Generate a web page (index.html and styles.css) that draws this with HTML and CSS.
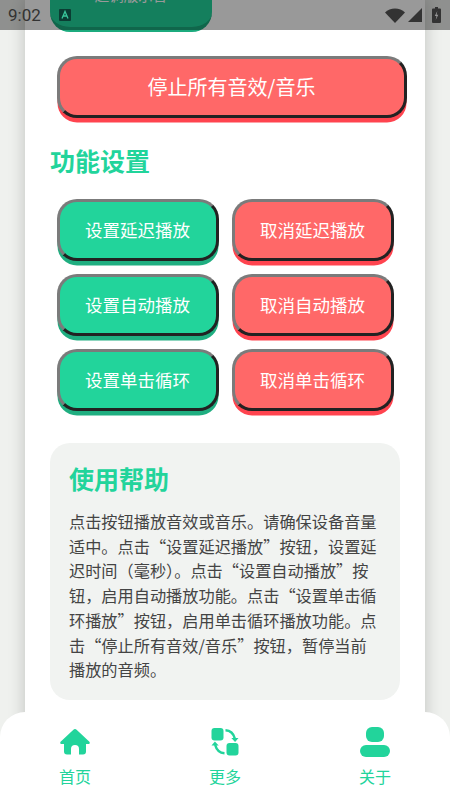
FILE: index.html
```html
<!DOCTYPE html>
<html lang="zh">
<head>
<meta charset="utf-8">
<title>功能设置</title>
<link rel="stylesheet" href="styles.css">
</head>
<body>
<div class="screen">
  <main class="card">
    <div class="peek"><span class="peek-text">起调版示音</span></div>
    <button class="btn red wide">停止所有音效/音乐</button>
    <h2 class="section-title">功能设置</h2>
    <div class="grid">
      <button class="btn green">设置延迟播放</button>
      <button class="btn red">取消延迟播放</button>
      <button class="btn green">设置自动播放</button>
      <button class="btn red">取消自动播放</button>
      <button class="btn green">设置单击循环</button>
      <button class="btn red">取消单击循环</button>
    </div>
    <section class="help">
      <h2 class="help-title">使用帮助</h2>
      <p class="help-text">点击按钮播放音效或音乐。请确保设备音量适中。点击“设置延迟播放”按钮，设置延迟时间（毫秒）。点击“设置自动播放”按钮，启用自动播放功能。点击“设置单击循环播放”按钮，启用单击循环播放功能。点击“停止所有音效/音乐”按钮，暂停当前播放的音频。</p>
    </section>
  </main>

  <header class="status">
    <span class="time">9:02</span>
    <svg class="a-icon" viewBox="0 0 12 12"><rect width="12" height="12" rx="1" fill="#0b3d33"/><path d="M3 9.500 6 2.500l3 7M4.200 7h3.600" fill="none" stroke="#39c69b" stroke-width="1.300"/></svg>
    <span class="status-right">
      <svg class="wifi" viewBox="0 0 20 15"><path d="M0 4.500C5-1 15-1 20 4.500L10 15z" fill="#333"/></svg>
      <svg class="signal" viewBox="0 0 14 14"><path d="M14 0v14H0z" fill="#333"/></svg>
      <svg class="battery" viewBox="0 0 9 16"><path d="M3 0h3v1.500h2a1 1 0 0 1 1 1V15a1 1 0 0 1-1 1H1a1 1 0 0 1-1-1V2.500a1 1 0 0 1 1-1h2z" fill="#333"/><path d="M5.300 4 2.800 9h1.700l-.8 4 2.600-5.300H4.600z" fill="#999"/></svg>
    </span>
  </header>

  <nav class="tabbar">
    <div class="tab">
      <svg class="tab-icon" viewBox="0 0 30 30"><path d="M15 2a2.300 2.300 0 0 1 1.600.7l12.800 12.100c.7.700.3 2.200-.9 2.200H26v7.500a3 3 0 0 1-3 3h-4v-5.500a4 4 0 0 0-8 0V27.500H7a3 3 0 0 1-3-3V17H1.500c-1.200 0-1.600-1.500-.9-2.200L13.400 2.700A2.300 2.300 0 0 1 15 2z"/></svg>
      <span>首页</span>
    </div>
    <div class="tab">
      <svg class="tab-icon" viewBox="-1.500 -1 30 30"><rect x="0" y="0" width="12" height="12.500" rx="3"/><rect x="15" y="15" width="12" height="12.500" rx="3"/><path d="M14 2.300c4.500.2 8 3.300 9.300 8.200" class="arc"/><path d="M19.800 10H27l-3.400 4z"/><path d="M13 25.200c-4.500-.2-8-3.300-9.300-8.200" class="arc"/><path d="M7.200 17.500H0l3.400-4z"/></svg>
      <span>更多</span>
    </div>
    <div class="tab">
      <svg class="tab-icon" viewBox="0 0 30 30"><rect x="6" y="0" width="18" height="15" rx="6"/><rect x="0" y="18" width="30" height="12" rx="6"/></svg>
      <span>关于</span>
    </div>
  </nav>
</div>
</body>
</html>
```
FILE: styles.css
```css
* { box-sizing: border-box; }
html, body { margin: 0; padding: 0; }
body { width: 450px; height: 800px; overflow: hidden; font-family: "Noto Sans CJK SC", "Noto Sans", sans-serif; }
.screen {
  position: relative;
  width: 450px;
  height: 800px;
  overflow: hidden;
  background: #eff1ee;
}
.card {
  position: relative;
  width: 400px;
  height: 800px;
  margin: 0 25px;
  padding: 56px 25px 0;
  background: #fff;
  box-shadow: 0 0 16px rgba(0,0,0,.2);
}
.peek {
  position: absolute;
  left: 25px;
  top: -30px;
  width: 162px;
  height: 62px;
  text-align: center;
  border-radius: 20px;
  background: #22d49b;
  border-bottom: 5px solid #1cab7e;
  color: #fff;
  font-size: 14.500px;
  line-height: 20px;
}
.peek-text { display: block; margin-top: 15px; }
.btn {
  display: block;
  height: 62px;
  padding: 0;
  border: 3px solid;
  border-color: #7b7b7b #222 #222 #7b7b7b;
  border-radius: 20px;
  color: #fff;
  font: 400 17.500px/1 "Noto Sans CJK SC", "Noto Sans", sans-serif;
}
.btn.red { background: #ff6868; box-shadow: 0 5px 0 -0.5px #ff444f; }
.btn.green { background: #22d49b; box-shadow: 0 5px 0 -0.5px #1fae80; }
.btn.wide { width: 350px; font-size: 20px; margin-left: 6.500px; }
.section-title {
  margin: 25px 0 0;
  color: #22d49b;
  font-size: 25px;
  font-weight: 700;
  line-height: 34px;
}
.grid {
  display: grid;
  grid-template-columns: 162px 162px;
  column-gap: 13px;
  row-gap: 13px;
  margin: 22px 0 0 6.500px;
}
.help {
  margin-top: 32px;
  height: 257px;
  padding: 18px 20px 0 19px;
  background: #f1f3f1;
  border-radius: 20px;
}
.help-title {
  margin: 0;
  color: #22d49b;
  font-size: 25px;
  font-weight: 700;
  line-height: 34px;
}
.help-text {
  margin: 14px 0 0;
  color: #444;
  font-size: 16.200px;
  line-height: 24.700px;
}
.status {
  position: absolute;
  left: 0;
  top: 0;
  width: 450px;
  height: 30px;
  display: flex;
  align-items: center;
  background: rgba(0,0,0,.4);
  color: #333;
}
.time { margin-left: 8px; font: 400 17px/1 Roboto, sans-serif; }
.a-icon { width: 12px; height: 12px; margin-left: 18px; }
.status-right { display: flex; align-items: center; margin-left: auto; }
.wifi { width: 20px; height: 15px; }
.signal { width: 14px; height: 14px; margin-left: 3px; }
.battery { width: 9px; height: 16px; margin: 0 9px 0 10px; }
.tabbar {
  position: absolute;
  left: 0;
  top: 712px;
  width: 450px;
  height: 88px;
  display: flex;
  background: #fff;
  border-radius: 25px 25px 0 0;
}
.tab {
  flex: 1;
  display: flex;
  flex-direction: column;
  align-items: center;
  color: #22d49b;
  font-size: 16px;
  line-height: 22px;
}
.tab-icon { height: 30px; margin-top: 15px; margin-bottom: 8px; fill: #22d49b; }
.tab-icon .arc { fill: none; stroke: #22d49b; stroke-width: 2.500; }
```
